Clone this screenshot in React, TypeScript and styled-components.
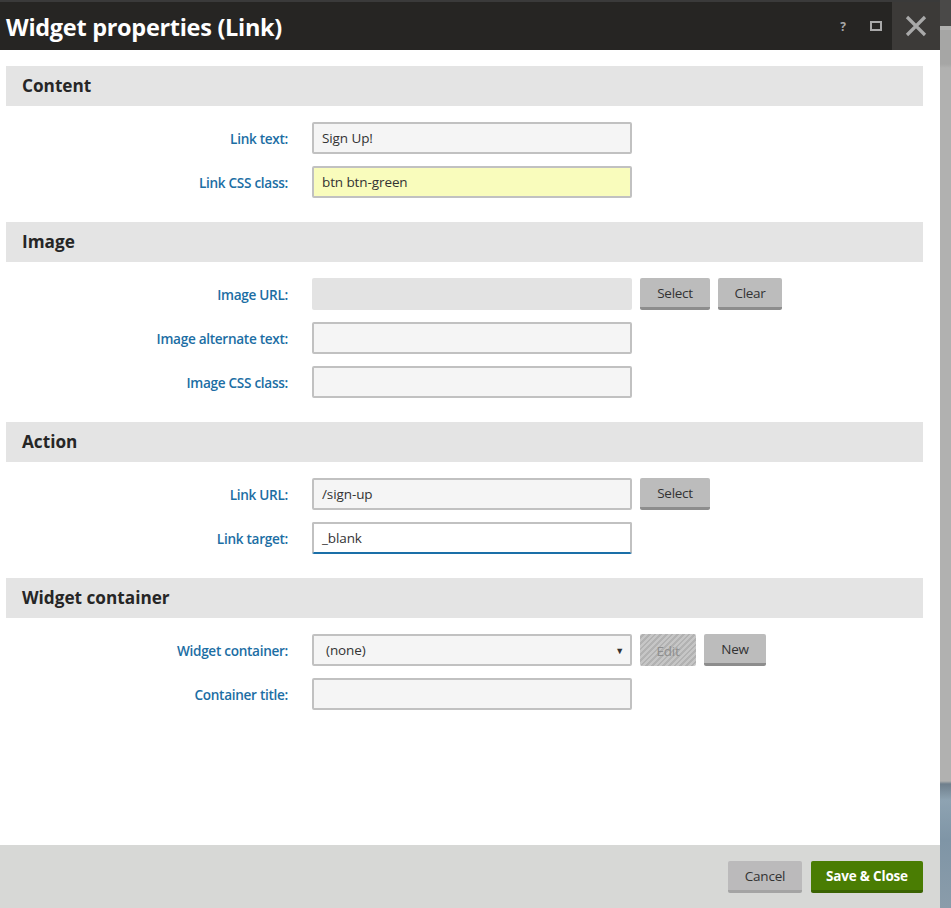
import React from "react";
import styled, { createGlobalStyle, css } from "styled-components";

const Global = createGlobalStyle`
  html, body { margin: 0; padding: 0; }
  body {
    background: #b2b2b2;
    font-family: "Open Sans", "Noto Sans", Arial, sans-serif;
    overflow: hidden;
  }
`;

const Page = styled.div`
  display: flex;
  width: 951px;
  height: 908px;
`;

const Dialog = styled.div`
  width: 940px;
  height: 908px;
  display: flex;
  flex-direction: column;
  background: #ffffff;
`;

const Backdrop = styled.div`
  flex: 1;
  background: linear-gradient(
    to bottom,
    #4a4948 0px,
    #4a4948 26px,
    #b1b1b0 26px,
    #b1b1b0 30px,
    #a6a6a5 30px,
    #a6a6a5 64px,
    #b1b1b0 68px,
    #b1b1b0 781px,
    #6f7f8c 784px,
    #8ea3b2 800px,
    #7f95a6 840px,
    #8a9caa 908px
  );
`;

const TitleBar = styled.div`
  height: 48px;
  border-top: 2px solid #3a3a3a;
  background: #262523;
  display: flex;
  align-items: center;
`;

const Title = styled.h1`
  flex: 1;
  margin: 0;
  padding-left: 6px;
  color: #ffffff;
  font-family: "Open Sans", "Noto Sans", Arial, sans-serif;
  font-weight: 700;
  font-size: 23.5px;
  letter-spacing: -0.3px;
  line-height: 48px;
  padding-top: 2px;
`;

const TitleIcon = styled.button<{ $gap?: number }>`
  width: 26px;
  height: 48px;
  margin-right: ${({ $gap }) => $gap ?? 0}px;
  border: 0;
  padding: 0;
  background: transparent;
  color: #a9a9a9;
  display: flex;
  align-items: center;
  justify-content: center;
  font-family: "Open Sans", Arial, sans-serif;
  font-weight: 700;
  font-size: 12px;
`;

const CloseButton = styled.button`
  width: 48px;
  height: 48px;
  margin-left: 3px;
  border: 0;
  padding: 0;
  background: #3c3a38;
  display: flex;
  align-items: center;
  justify-content: center;
`;

const Body = styled.div`
  flex: 1;
  padding: 16px 17px 0 6px;
  display: flex;
  flex-direction: column;
  gap: 24px;
`;

const Section = styled.section`
  display: flex;
  flex-direction: column;
`;

const SectionHeader = styled.h2`
  margin: 0 0 16px 0;
  height: 40px;
  line-height: 40px;
  padding-left: 16px;
  background: #e4e4e4;
  color: #262626;
  font-family: "Open Sans", "Noto Sans", Arial, sans-serif;
  font-weight: 700;
  font-size: 17.2px;
`;

const Rows = styled.div`
  display: grid;
  grid-template-columns: 282px auto;
  column-gap: 24px;
  row-gap: 12px;
  align-items: center;
`;

const Label = styled.label`
  text-align: right;
  color: #1c6ea4;
  font-size: 13.6px;
  font-weight: 600;
  letter-spacing: -0.3px;
`;

const Controls = styled.div`
  display: flex;
  gap: 8px;
  align-items: center;
`;

type Variant = "default" | "yellow" | "disabled" | "focus";

const Input = styled.div<{ $variant?: Variant }>`
  box-sizing: border-box;
  width: 320px;
  height: 32px;
  border: 2px solid #c1c1c1;
  border-radius: 2px;
  background: #f5f5f5;
  color: #333333;
  font-size: 13.5px;
  padding: 0 8px;
  display: flex;
  align-items: center;
  letter-spacing: -0.1px;
  ${({ $variant }) =>
    $variant === "yellow" &&
    css`
      background: #f9fcbc;
    `}
  ${({ $variant }) =>
    $variant === "disabled" &&
    css`
      background: #e3e3e3;
      border-color: #e3e3e3;
    `}
  ${({ $variant }) =>
    $variant === "focus" &&
    css`
      background: #ffffff;
      border-bottom-color: #1a6fa8;
    `}
`;

const SelectBox = styled(Input)`
  justify-content: space-between;
  padding: 0 6px 0 12px;
`;

const Arrow = styled.span`
  font-size: 9px;
  color: #333;
`;

const Button = styled.button<{ $w: number; $disabled?: boolean }>`
  box-sizing: border-box;
  width: ${({ $w }) => $w}px;
  height: 32px;
  border: 0;
  border-radius: 2px;
  border-bottom: 3px solid #8d8d8d;
  background: #bcbcbc;
  color: #333333;
  font-family: "Open Sans", "Noto Sans", Arial, sans-serif;
  font-size: 13.5px;
  letter-spacing: -0.3px;
  padding: 1px 0 0 0;
  ${({ $disabled }) =>
    $disabled &&
    css`
      border-bottom: 0;
      color: #8f8f8f;
      background: repeating-linear-gradient(
        135deg,
        #c6c6c6 0px,
        #c6c6c6 2px,
        #b2b2b2 2px,
        #b2b2b2 4px
      );
    `}
`;

const Footer = styled.div`
  height: 63px;
  background: #d7d8d6;
  display: flex;
  justify-content: flex-end;
  align-items: center;
  gap: 9px;
  padding-right: 17px;
`;

const FooterButton = styled.button<{ $primary?: boolean; $w: number }>`
  box-sizing: border-box;
  width: ${({ $w }) => $w}px;
  height: 32px;
  border: 0;
  border-radius: 2px;
  border-bottom: 3px solid #a4a4a4;
  background: #bbbabb;
  color: #333;
  font-family: "Open Sans", "Noto Sans", Arial, sans-serif;
  font-size: 13.5px;
  letter-spacing: -0.2px;
  padding: 1px 0 0 0;
  ${({ $primary }) =>
    $primary &&
    css`
      background: #4a7d03;
      border-bottom-color: #3a6302;
      color: #ffffff;
      font-weight: 700;
    `}
`;

type Field = {
  label: string;
  value?: string;
  variant?: Variant;
  select?: boolean;
  buttons?: { text: string; w: number; disabled?: boolean }[];
};

const sections: { title: string; fields: Field[] }[] = [
  {
    title: "Content",
    fields: [
      { label: "Link text:", value: "Sign Up!" },
      { label: "Link CSS class:", value: "btn btn-green", variant: "yellow" },
    ],
  },
  {
    title: "Image",
    fields: [
      {
        label: "Image URL:",
        variant: "disabled",
        buttons: [
          { text: "Select", w: 70 },
          { text: "Clear", w: 64 },
        ],
      },
      { label: "Image alternate text:" },
      { label: "Image CSS class:" },
    ],
  },
  {
    title: "Action",
    fields: [
      { label: "Link URL:", value: "/sign-up", buttons: [{ text: "Select", w: 70 }] },
      { label: "Link target:", value: "_blank", variant: "focus" },
    ],
  },
  {
    title: "Widget container",
    fields: [
      {
        label: "Widget container:",
        value: "(none)",
        select: true,
        buttons: [
          { text: "Edit", w: 56, disabled: true },
          { text: "New", w: 62 },
        ],
      },
      { label: "Container title:" },
    ],
  },
];

export default function App() {
  return (
    <>
      <Global />
      <Page>
        <Dialog>
          <TitleBar>
            <Title>Widget properties (Link)</Title>
            <TitleIcon aria-label="Help" $gap={7}>
              ?
            </TitleIcon>
            <TitleIcon aria-label="Maximize">
              <svg width="12" height="10" viewBox="0 0 12 10">
                <rect x="1" y="1" width="10" height="8" fill="none" stroke="#a9a9a9" strokeWidth="2" />
              </svg>
            </TitleIcon>
            <CloseButton aria-label="Close">
              <svg width="22" height="22" viewBox="0 0 22 22">
                <path d="M2 2 L20 20 M20 2 L2 20" stroke="#a9a9a9" strokeWidth="3.2" strokeLinecap="butt" />
              </svg>
            </CloseButton>
          </TitleBar>
          <Body>
            {sections.map((s) => (
              <Section key={s.title}>
                <SectionHeader>{s.title}</SectionHeader>
                <Rows>
                  {s.fields.map((f) => (
                    <React.Fragment key={f.label}>
                      <Label>{f.label}</Label>
                      <Controls>
                        {f.select ? (
                          <SelectBox>
                            <span>{f.value}</span>
                            <Arrow>▼</Arrow>
                          </SelectBox>
                        ) : (
                          <Input $variant={f.variant}>{f.value}</Input>
                        )}
                        {f.buttons?.map((b) => (
                          <Button key={b.text} $w={b.w} $disabled={b.disabled}>
                            {b.text}
                          </Button>
                        ))}
                      </Controls>
                    </React.Fragment>
                  ))}
                </Rows>
              </Section>
            ))}
          </Body>
          <Footer>
            <FooterButton $w={74}>Cancel</FooterButton>
            <FooterButton $w={112} $primary>
              Save &amp; Close
            </FooterButton>
          </Footer>
        </Dialog>
        <Backdrop />
      </Page>
    </>
  );
}
